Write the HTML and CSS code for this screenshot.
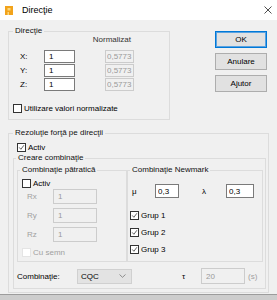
FILE: index.html
```html
<!DOCTYPE html>
<html lang="ro">
  <head>
    <meta charset="UTF-8" />
    <title>Direcţie</title>
    <link rel="stylesheet" href="styles.css">
  </head>
  <body>
    <div class="dialog">
      <div class="titlebar">
        <svg class="logo" viewBox="0 0 8 9">
          <rect x="0" y="0" width="8" height="9" fill="#f2a31b" />
          <rect x="2.5" y="2" width="3" height="2.5" fill="#fbd77d" />
          <rect x="2.5" y="6" width="1.5" height="3" fill="#fbd77d" />
        </svg>
        <span class="title">Direcţie</span>
        <svg class="close" viewBox="0 0 8 8">
          <path d="M0.5 0.5 L7.5 7.5 M7.5 0.5 L0.5 7.5" stroke="#222" stroke-width="0.8" />
        </svg>
      </div>
      <div class="content">
        <div class="top">
          <fieldset class="grp dir">
            <legend>Direcţie</legend>
            <div class="coords">
              <span class="head">Normalizat</span>
              <span>X:</span>
              <input class="field" type="text" value="1" />
              <input class="field norm" type="text" value="0,5773" disabled />
              <span>Y:</span>
              <input class="field" type="text" value="1" />
              <input class="field norm" type="text" value="0,5773" disabled />
              <span>Z:</span>
              <input class="field" type="text" value="1" />
              <input class="field norm" type="text" value="0,5773" disabled />
            </div>
            <label class="check use-norm"><span class="box"></span>Utilizare valori normalizate</label>
          </fieldset>
          <div class="btns">
            <button class="ok">OK</button>
            <button>Anulare</button>
            <button>Ajutor</button>
          </div>
        </div>

        <fieldset class="grp rez">
          <legend>Rezoluţie forţă pe direcţii</legend>
          <label class="check rez-activ">
            <span class="box"><svg viewBox="0 0 9 9"><path d="M1.6 4.4 L3.7 6.8 L7.6 1.6" /></svg></span>Activ
          </label>

          <fieldset class="grp creare">
            <legend>Creare combinaţie</legend>
            <div class="inner">
              <fieldset class="grp patr">
                <legend>Combinaţie pătratică</legend>
                <label class="check patr-activ"><span class="box"></span>Activ</label>
                <div class="rvals">
                  <span class="off">Rx</span>
                  <input class="field" type="text" value="1" disabled />
                  <span class="off">Ry</span>
                  <input class="field" type="text" value="1" disabled />
                  <span class="off">Rz</span>
                  <input class="field" type="text" value="1" disabled />
                </div>
                <label class="check off semn"><span class="box dis"></span>Cu semn</label>
              </fieldset>

              <fieldset class="grp newm">
                <legend>Combinaţie Newmark</legend>
                <div class="coef">
                  <span class="mu">μ</span>
                  <input class="field small mu-in" type="text" value="0,3" />
                  <span class="lam">λ</span>
                  <input class="field small lam-in" type="text" value="0,3" />
                </div>
                <div class="grups">
                  <label class="check"><span class="box"><svg viewBox="0 0 9 9"><path d="M1.6 4.4 L3.7 6.8 L7.6 1.6" /></svg></span>Grup 1</label>
                  <label class="check"><span class="box"><svg viewBox="0 0 9 9"><path d="M1.6 4.4 L3.7 6.8 L7.6 1.6" /></svg></span>Grup 2</label>
                  <label class="check"><span class="box"><svg viewBox="0 0 9 9"><path d="M1.6 4.4 L3.7 6.8 L7.6 1.6" /></svg></span>Grup 3</label>
                </div>
              </fieldset>
            </div>

            <div class="bottom">
              <span class="comb-label">Combinaţie:</span>
              <div class="combo">
                <span>CQC</span>
                <svg viewBox="0 0 7 4"><path d="M0.5 0.5 L3.5 3.3 L6.5 0.5" /></svg>
              </div>
              <span class="tau">τ</span>
              <input class="field tau-in" type="text" value="20" disabled />
              <span class="off unit">(s)</span>
            </div>
          </fieldset>
        </fieldset>
      </div>
    </div>
  </body>
</html>
```

FILE: styles.css
```css
* {
  box-sizing: border-box;
}
body {
  margin: 0;
  background: #cdcdcd;
  font-family: "Liberation Sans", Arial, sans-serif;
  font-size: 8px;
  color: #000;
}
.dialog {
  width: 277px;
}
.titlebar {
  height: 20px;
  background: #fff;
  display: flex;
  align-items: center;
  padding-left: 5px;
}
.logo {
  width: 8px;
  height: 9px;
}
.title {
  margin-left: 9px;
  font-size: 9px;
}
.close {
  margin-left: auto;
  margin-right: 5px;
  width: 8px;
  height: 8px;
}
.content {
  height: 275px;
  background: #f0f0f0;
  border-bottom: 1px solid #9c9c9c;
  padding-left: 8px;
}

/* group boxes */
.grp {
  margin: 0;
  padding: 0;
  min-width: 0;
  border: 1px solid #dcdcdc;
}
.grp > legend {
  padding: 0 2px;
  line-height: 8px;
  font-weight: normal;
  color: #111;
}

/* top part */
.top {
  display: flex;
  padding-top: 7px;
}
.dir {
  width: 162px;
  height: 93px;
  padding-left: 11px;
}
.dir > legend {
  margin-left: -7px;
}
.coords {
  display: grid;
  grid-template-columns: 24px 31px 30px 29px;
  grid-template-rows: 14px 13px 13px 13px;
  row-gap: 1px;
  align-items: center;
}
.coords > span {
  grid-column: 1;
}
.coords .head {
  grid-column: 3 / 5;
  justify-self: end;
  align-self: start;
  margin-right: 3px;
  color: #333;
}
.coords .norm {
  grid-column: 4;
}
.coords .field {
  height: 13px;
}

.field {
  width: 100%;
  height: 15px;
  margin: 0;
  padding: 0 0 0 4px;
  border: 1px solid #7a7a7a;
  background: #fff;
  font: inherit;
  color: #000;
}
.field:disabled {
  border-color: #cccccc;
  background: #f0f0f0;
  color: #9a9a9a;
}
.field.norm {
  padding-left: 1px;
}

.check {
  display: flex;
  align-items: center;
  height: 10px;
}
.box {
  width: 9px;
  height: 9px;
  margin-right: 2px;
  border: 1px solid #333;
  background: #fff;
  display: flex;
}
.box svg {
  width: 7px;
  height: 7px;
  fill: none;
  stroke: #222;
  stroke-width: 0.9;
}
.box.dis {
  border-color: #e4e4e4;
}
.off {
  color: #a0a0a0;
}
.use-norm {
  margin: 13px 0 0 -7px;
  height: 9px;
}

/* buttons */
.btns {
  display: flex;
  flex-direction: column;
  gap: 5px;
  margin: 4px 0 0 45px;
}
.btns button {
  width: 52px;
  height: 17px;
  padding: 0;
  border: 1px solid #adadad;
  background: #e1e1e1;
  font: inherit;
  color: #000;
}
.btns .ok {
  border-color: #0078d7;
  box-shadow: inset 0 0 0 1px #5aa2e0;
}

/* lower part */
.rez {
  width: 261px;
  height: 164px;
  margin-top: 9px;
  padding: 0 2px 0 4px;
}
.rez-activ {
  margin: 5px 0 0 4px;
}
.creare {
  width: 253px;
  height: 135px;
  margin-top: 2px;
  padding-left: 3px;
}
.creare > legend {
  margin-left: -1px;
}
.inner {
  display: flex;
  margin-top: 4px;
}
.patr {
  width: 110px;
  height: 96px;
  padding-left: 4px;
}
.patr > legend {
  margin-left: -2px;
}
.patr-activ {
  margin-top: 4px;
}
.rvals {
  display: grid;
  grid-template-columns: 31px 44px;
  grid-auto-rows: 15px;
  row-gap: 4px;
  align-items: center;
  margin-top: 1px;
}
.rvals span {
  padding-left: 5px;
}
.semn {
  margin-top: 5px;
}

.newm {
  width: 136px;
  height: 96px;
  padding-left: 2px;
}
.coef {
  display: flex;
  align-items: center;
  height: 14px;
  margin-top: 10px;
}
.mu {
  width: 23px;
  margin-left: 2px;
}
.lam {
  width: 24px;
  margin-left: 23px;
}
.field.small {
  height: 14px;
  padding-left: 2px;
}
.mu-in {
  width: 24px;
}
.lam-in {
  width: 28px;
}
.grups {
  display: flex;
  flex-direction: column;
  gap: 7px;
  margin-top: 12px;
}

.bottom {
  display: flex;
  align-items: center;
  height: 16px;
  margin-top: 6px;
}
.comb-label {
  width: 60px;
}
.combo {
  width: 55px;
  height: 15px;
  display: flex;
  align-items: center;
  justify-content: space-between;
  padding: 0 5px 0 3px;
  border: 1px solid #d0d0d0;
  background: #e3e3e3;
}
.combo svg {
  width: 7px;
  height: 4px;
  fill: none;
  stroke: #777;
  stroke-width: 0.8;
}
.tau {
  width: 19px;
  margin-left: 50px;
}
.tau-in {
  width: 44px;
  height: 16px;
}
.unit {
  margin-left: 3px;
}
```
